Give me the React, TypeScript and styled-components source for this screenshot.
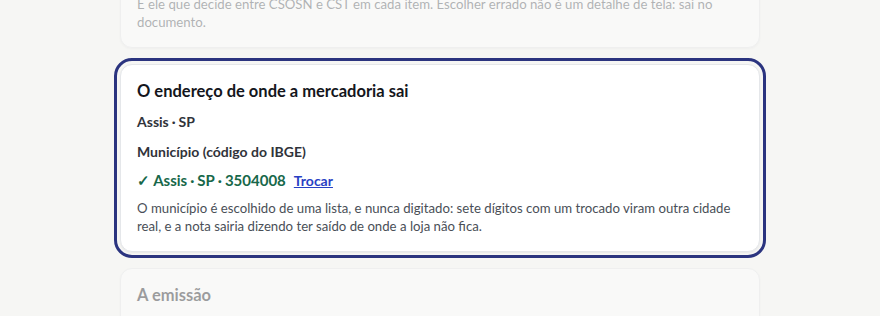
import React from "react";
import styled, { createGlobalStyle } from "styled-components";

const Global = createGlobalStyle`
  html, body { margin: 0; padding: 0; }
  body {
    background: #f6f6f4;
    font-family: Lato, "Noto Sans", sans-serif;
    overflow: hidden;
  }
`;

const Page = styled.div`
  width: 640px;
  margin: -22px auto 0;
  display: flex;
  flex-direction: column;
  gap: 16px;
`;

const Card = styled.section<{ $dim?: boolean; $focus?: boolean }>`
  box-sizing: border-box;
  background: #ffffff;
  border: 1px solid #e5e7ea;
  border-radius: 12px;
  padding: 16px;
  display: flex;
  flex-direction: column;
  box-shadow: 0 1px 2px rgba(20, 24, 40, 0.06);
  opacity: ${(p) => (p.$dim ? 0.4 : 1)};
  outline: ${(p) => (p.$focus ? "3px solid #2b347f" : "none")};
  outline-offset: 3px;
`;

const Title = styled.h2`
  margin: 0 0 10px;
  font-size: 16.5px;
  line-height: 21px;
  font-weight: 700;
  color: #14161c;
`;

const Place = styled.div`
  font-size: 14px;
  line-height: 20px;
  font-weight: 700;
  color: #30333a;
  margin-bottom: 10px;
`;

const FieldLabel = styled.div`
  font-size: 14px;
  line-height: 20px;
  font-weight: 700;
  color: #30333a;
  margin-bottom: 8px;
`;

const Chosen = styled.div`
  display: flex;
  align-items: baseline;
  gap: 8px;
  margin-bottom: 9px;
`;

const ChosenValue = styled.span`
  font-size: 15px;
  line-height: 20px;
  font-weight: 700;
  color: #17684a;
`;

const SwapLink = styled.a`
  font-size: 14px;
  font-weight: 700;
  color: #2840c4;
  text-decoration: underline;
  cursor: pointer;
`;

const Note = styled.p`
  margin: 0;
  font-size: 13.2px;
  line-height: 18px;
  color: #4a4f57;
`;

const Dot = styled.span`
  margin: 0 3px;
`;

export default function App() {
  return (
    <>
      <Global />
      <Page>
        <Card $dim>
          <Note>
            É ele que decide entre CSOSN e CST em cada item. Escolher errado não é um detalhe de tela: sai no
            documento.
          </Note>
        </Card>
        <Card $focus>
          <Title>O endereço de onde a mercadoria sai</Title>
          <Place>
            Assis<Dot>·</Dot>SP
          </Place>
          <FieldLabel>Município (código do IBGE)</FieldLabel>
          <Chosen>
            <ChosenValue>
              ✓ Assis<Dot>·</Dot>SP<Dot>·</Dot>3504008
            </ChosenValue>
            <SwapLink>Trocar</SwapLink>
          </Chosen>
          <Note>
            O município é escolhido de uma lista, e nunca digitado: sete dígitos com um trocado viram outra cidade
            real, e a nota sairia dizendo ter saído de onde a loja não fica.
          </Note>
        </Card>
        <Card $dim>
          <Title>A emissão</Title>
        </Card>
      </Page>
    </>
  );
}
